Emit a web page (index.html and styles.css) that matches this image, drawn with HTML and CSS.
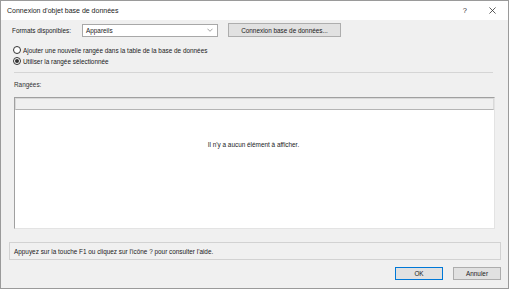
FILE: index.html
```html
<!DOCTYPE html>
<html lang="fr">
    <head>
        <meta charset="UTF-8" />
        <title>Connexion d'objet base de données</title>
        <link rel="stylesheet" href="styles.css">
    </head>
    <body>
        <div class="dialog">
            <div class="titlebar">
                <span class="title">Connexion d'objet base de données</span>
                <span class="help">?</span>
                <svg class="close" viewBox="0 0 8 8">
                    <path d="M0.5 0.5L7.5 7.5M7.5 0.5L0.5 7.5" />
                </svg>
            </div>

            <div class="content">
                <div class="formats">
                    <label class="label">Formats disponibles:</label>
                    <div class="combo">
                        <span>Appareils</span>
                        <svg viewBox="0 0 7 4">
                            <path d="M0.5 0.5L3.5 3.5L6.5 0.5" />
                        </svg>
                    </div>
                    <button class="button wide">Connexion base de données...</button>
                </div>

                <div class="radios">
                    <div class="radio">
                        <span class="dot"></span>
                        <span>Ajouter une nouvelle rangée dans la table de la base de données</span>
                    </div>
                    <div class="radio">
                        <span class="dot checked"></span>
                        <span>Utiliser la rangée sélectionnée</span>
                    </div>
                </div>

                <div class="separator"></div>

                <div class="rows-label">Rangées:</div>

                <div class="list">
                    <div class="list-head"></div>
                    <div class="list-body">
                        <p>Il n'y a aucun élément à afficher.</p>
                    </div>
                </div>
            </div>

            <div class="status">Appuyez sur la touche F1 ou cliquez sur l'icône ? pour consulter l'aide.</div>

            <div class="actions">
                <button class="button ok">OK</button>
                <button class="button">Annuler</button>
            </div>
        </div>
    </body>
</html>
```

FILE: styles.css
```css
* {
    margin: 0;
    padding: 0;
    box-sizing: border-box;
}
body {
    background: #fff;
    font-family: 'Liberation Sans', Arial, sans-serif;
    font-size: 6.4px;
    color: #1a1a1a;
}
.dialog {
    width: 509px;
    height: 289px;
    border: 1px solid #9a9a9a;
    background: #f0f0f0;
    display: flex;
    flex-direction: column;
}
.titlebar {
    height: 19px;
    background: #fff;
    display: flex;
    align-items: center;
    padding: 0 0 0 6px;
}
.titlebar .title {
    flex: 1;
    font-size: 7px;
}
.titlebar .help {
    font-size: 7.5px;
    color: #333;
    margin-right: 22px;
}
.titlebar .close {
    width: 7px;
    height: 7px;
    margin-right: 12px;
    stroke: #333;
    stroke-width: 0.9;
    fill: none;
}
.content {
    padding: 3px 13px 0 11px;
}
.formats {
    display: flex;
    align-items: center;
}
.formats .label {
    width: 70px;
}
.combo {
    width: 136px;
    height: 13px;
    background: #fff;
    border: 1px solid #a8a8a8;
    display: flex;
    align-items: center;
    justify-content: space-between;
    padding: 0 4px 0 3px;
}
.combo svg {
    width: 6px;
    height: 4px;
    stroke: #7a7a7a;
    stroke-width: 0.8;
    fill: none;
}
.button {
    height: 13px;
    width: 48px;
    background: #e1e1e1;
    border: 1px solid #adadad;
    font-family: 'Liberation Sans', Arial, sans-serif;
    font-size: 6.4px;
    color: #1a1a1a;
}
.button.wide {
    width: 113px;
    height: 14px;
    margin-left: 10px;
}
.button.ok {
    border-color: #0078d7;
}
.radios {
    margin-top: 9px;
    display: flex;
    flex-direction: column;
    gap: 3px;
}
.radio {
    display: flex;
    align-items: center;
    height: 8px;
    margin-left: 1px;
}
.dot {
    width: 8px;
    height: 8px;
    border: 1px solid #333;
    border-radius: 50%;
    background: #fff;
    margin-right: 2px;
    display: flex;
    align-items: center;
    justify-content: center;
}
.dot.checked::after {
    content: '';
    width: 4px;
    height: 4px;
    border-radius: 50%;
    background: #333;
}
.separator {
    margin: 7px 2px 0 2px;
    height: 1px;
    background: #d5d5d5;
}
.rows-label {
    margin: 8px 0 0 2px;
    color: #333;
}
.list {
    margin: 9px 0 0 2px;
    height: 132px;
    border: 1px solid #a0a0a0;
    border-right-color: #e3e3e3;
    border-bottom-color: #e3e3e3;
    display: flex;
    flex-direction: column;
}
.list-head {
    height: 12px;
    background: #f0f0f0;
    border: 1px solid #d9d9d9;
    border-bottom: 1px solid #b5b5b5;
}
.list-body {
    flex: 1;
    background: #fff;
    display: flex;
    justify-content: center;
    padding-top: 31px;
}
.list-body p {
    margin-left: -2px;
}
.status {
    margin: 13px 7px 0 8px;
    height: 18px;
    border: 1px solid #d2d2d2;
    display: flex;
    align-items: center;
    padding-left: 4px;
}
.actions {
    display: flex;
    justify-content: flex-end;
    gap: 10px;
    margin: 7px 7px 0 0;
}
```
